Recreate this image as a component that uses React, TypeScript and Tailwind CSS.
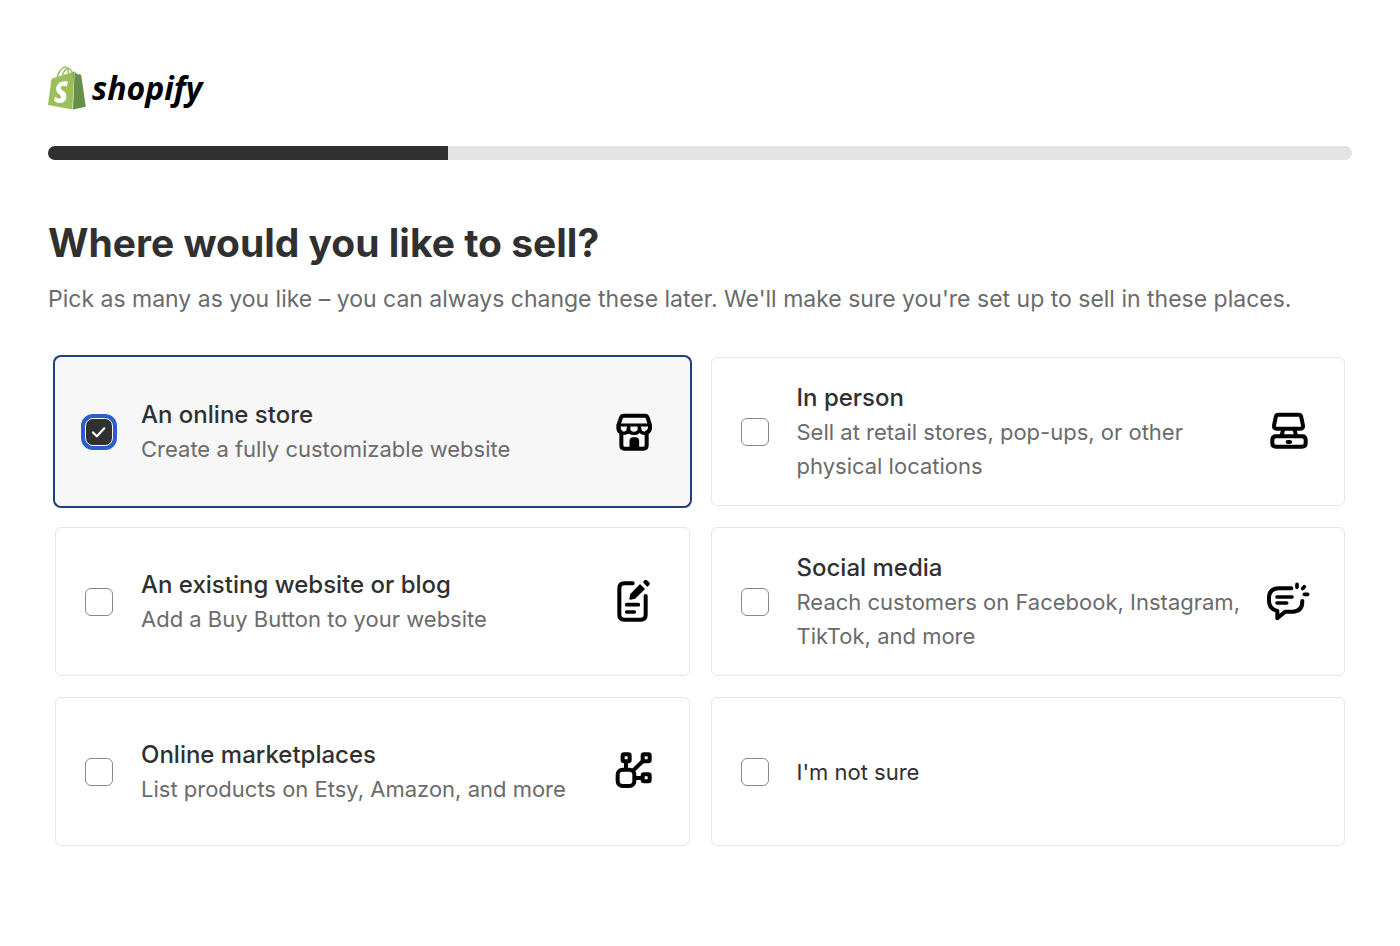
import { useState } from "react";
import type { ReactNode } from "react";
import { SiShopify } from "react-icons/si";

type Channel = {
  id: string;
  title: string;
  description?: string;
  icon?: ReactNode;
};

function IconFrame({ children }: { children: ReactNode }) {
  return (
    <svg
      viewBox="22 30 132 132"
      className="size-11 shrink-0 text-black"
      fill="none"
      stroke="currentColor"
      strokeWidth="12"
      strokeLinecap="round"
      strokeLinejoin="round"
      aria-hidden="true"
    >
      {children}
    </svg>
  );
}

const channels: Channel[] = [
  {
    id: "online-store",
    title: "An online store",
    description: "Create a fully customizable website",
    icon: (
      <IconFrame>
        <path d="M60 47h64q6 0 8 6l7 23v7q0 10-10 14v39q0 10-10 10H63q-10 0-10-10V97q-9-4-9-14v-7l8-23q2-6 8-6Z" />
        <path d="M46 75h92" strokeWidth="9" />
        <path d="M46 77v8q0 15 14 15t14-15q1 15 17 15t17-15q0 15 15 15t15-15v-8" strokeWidth="10" />
        <path d="M75 78v8M107 78v8" strokeWidth="10" />
        <path d="M80 143v-20q0-9 9-9h6q9 0 9 9v20Z" fill="currentColor" strokeWidth="5" />
      </IconFrame>
    ),
  },
  {
    id: "in-person",
    title: "In person",
    description: "Sell at retail stores, pop-ups, or other physical locations",
    icon: (
      <IconFrame>
        <path d="M60 44h59q8 0 9 8l5 25q1 9-8 9H54q-9 0-8-9l5-25q1-8 9-8Z" />
        <path d="M74 88l-5 18M107 88l5 18" />
        <path d="M52 109h78q11 0 11 11v10q0 10-11 10H52q-11 0-11-10v-10q0-11 11-11Z" />
        <path d="M87 126h7" />
      </IconFrame>
    ),
  },
  {
    id: "existing-website",
    title: "An existing website or blog",
    description: "Add a Buy Button to your website",
    icon: (
      <IconFrame>
        <path d="M87 40H62q-15 0-15 15v79q0 15 15 15h49q15 0 15-15V78" />
        <path d="M69 104h35M69 126h23" strokeWidth="11" />
        <path d="M80 86l3-13 26-27 11 11-27 26Z" fill="currentColor" strokeWidth="6" />
        <path d="M122 36l4-4 9 9-4 5Z" fill="currentColor" strokeWidth="7" />
      </IconFrame>
    ),
  },
  {
    id: "social-media",
    title: "Social media",
    description: "Reach customers on Facebook, Instagram, TikTok, and more",
    icon: (
      <IconFrame>
        <path d="M98 55H61q-30 0-30 30v7q0 24 25 31v22l23-20h23q29 0 29-32" />
        <path d="M55 81h45M55 99h29" strokeWidth="11" />
        <path d="M115 43v9M132 56l5-6M137 73h10" strokeWidth="11" />
      </IconFrame>
    ),
  },
  {
    id: "marketplaces",
    title: "Online marketplaces",
    description: "List products on Etsy, Amazon, and more",
    icon: (
      <IconFrame>
        <rect x="42" y="89" width="50" height="49" rx="15" />
        <rect x="57" y="43" width="21" height="21" rx="4" />
        <rect x="117" y="43" width="21" height="21" rx="4" />
        <rect x="117" y="103" width="21" height="21" rx="4" />
        <path d="M67 67v20M118 63L88 92M95 114h20" />
      </IconFrame>
    ),
  },
  { id: "not-sure", title: "I'm not sure" },
];

function Logo() {
  return (
    <div className="flex h-11 items-center gap-1.5">
      <svg className="absolute size-0" aria-hidden="true">
        <defs>
          <linearGradient id="bag" gradientUnits="userSpaceOnUse" x1="0" y1="0" x2="24" y2="0">
            <stop offset="0.632" stopColor="#9bbf5a" />
            <stop offset="0.632" stopColor="#66904a" />
          </linearGradient>
        </defs>
      </svg>
      <SiShopify viewBox="1.4 0 21.2 24" fill="url(#bag)" className="h-11 w-[38px]" aria-hidden="true" />
      <span className="font-['Open_Sans',sans-serif] text-[32px] leading-[44px] font-bold text-black italic">
        shopify
      </span>
    </div>
  );
}

function ChannelCard({
  channel,
  checked,
  onToggle,
}: {
  channel: Channel;
  checked: boolean;
  onToggle: () => void;
}) {
  return (
    <label
      htmlFor={channel.id}
      className={
        "flex min-h-[149px] cursor-pointer items-center rounded-md border py-5 pr-[34px] pl-[29px] " +
        (checked ? "border-[#f7f7f7] bg-[#f7f7f7] ring-2 ring-[#1f4078]" : "border-[#e6e6e6] bg-white")
      }
    >
      <span className="grid size-7 shrink-0 place-items-center">
        <input
          id={channel.id}
          type="checkbox"
          checked={checked}
          onChange={onToggle}
          className="col-start-1 row-start-1 size-7 appearance-none rounded-md border border-[#8a8a8a] bg-white checked:rounded-lg checked:border-[#f7f7f7] checked:bg-[#303030] checked:ring-4 checked:ring-[#2a5fc9]"
        />
        {checked && (
          <svg
            viewBox="0 0 28 28"
            className="pointer-events-none col-start-1 row-start-1 size-7"
            fill="none"
            stroke="white"
            strokeWidth="2.2"
            strokeLinecap="round"
            strokeLinejoin="round"
            aria-hidden="true"
          >
            <path d="M8 14.5l3.8 3.8 7.5-8" />
          </svg>
        )}
      </span>
      <span className="ml-7 min-w-0 flex-1 pr-5 text-[22px] leading-[34px]">
        <span
          className={
            "block text-[#303030] " + (channel.description ? "text-2xl leading-[34px] font-medium" : "font-normal")
          }
        >
          {channel.title}
        </span>
        {channel.description && <span className="block text-[#6b6b6b]">{channel.description}</span>}
      </span>
      {channel.icon}
    </label>
  );
}

export default function App() {
  const [selected, setSelected] = useState<string[]>(["online-store"]);

  const toggle = (id: string) =>
    setSelected((current) => (current.includes(id) ? current.filter((c) => c !== id) : [...current, id]));

  return (
    <main className="min-h-screen bg-white px-12 pt-[66px] pb-12 font-['Inter',sans-serif]">
      <Logo />
      <div
        role="progressbar"
        aria-label="Setup progress"
        aria-valuenow={31}
        aria-valuemin={0}
        aria-valuemax={100}
        className="mt-9 h-[14px] overflow-hidden rounded-full bg-[#e3e3e3]"
      >
        <div className="h-full w-[30.7%] bg-[#303030]" />
      </div>
      <h1 className="mt-[57px] text-[39px] leading-[52px] font-bold text-[#303030]">Where would you like to sell?</h1>
      <p className="mt-3 text-[23px] leading-9 text-[#6b6b6b]">
        Pick as many as you like – you can always change these later. We'll make sure you're set up to sell in these
        places.
      </p>
      <div className="mx-[7px] mt-10 grid grid-cols-1 gap-[21px] md:grid-cols-2">
        {channels.map((channel) => (
          <ChannelCard
            key={channel.id}
            channel={channel}
            checked={selected.includes(channel.id)}
            onToggle={() => toggle(channel.id)}
          />
        ))}
      </div>
    </main>
  );
}
